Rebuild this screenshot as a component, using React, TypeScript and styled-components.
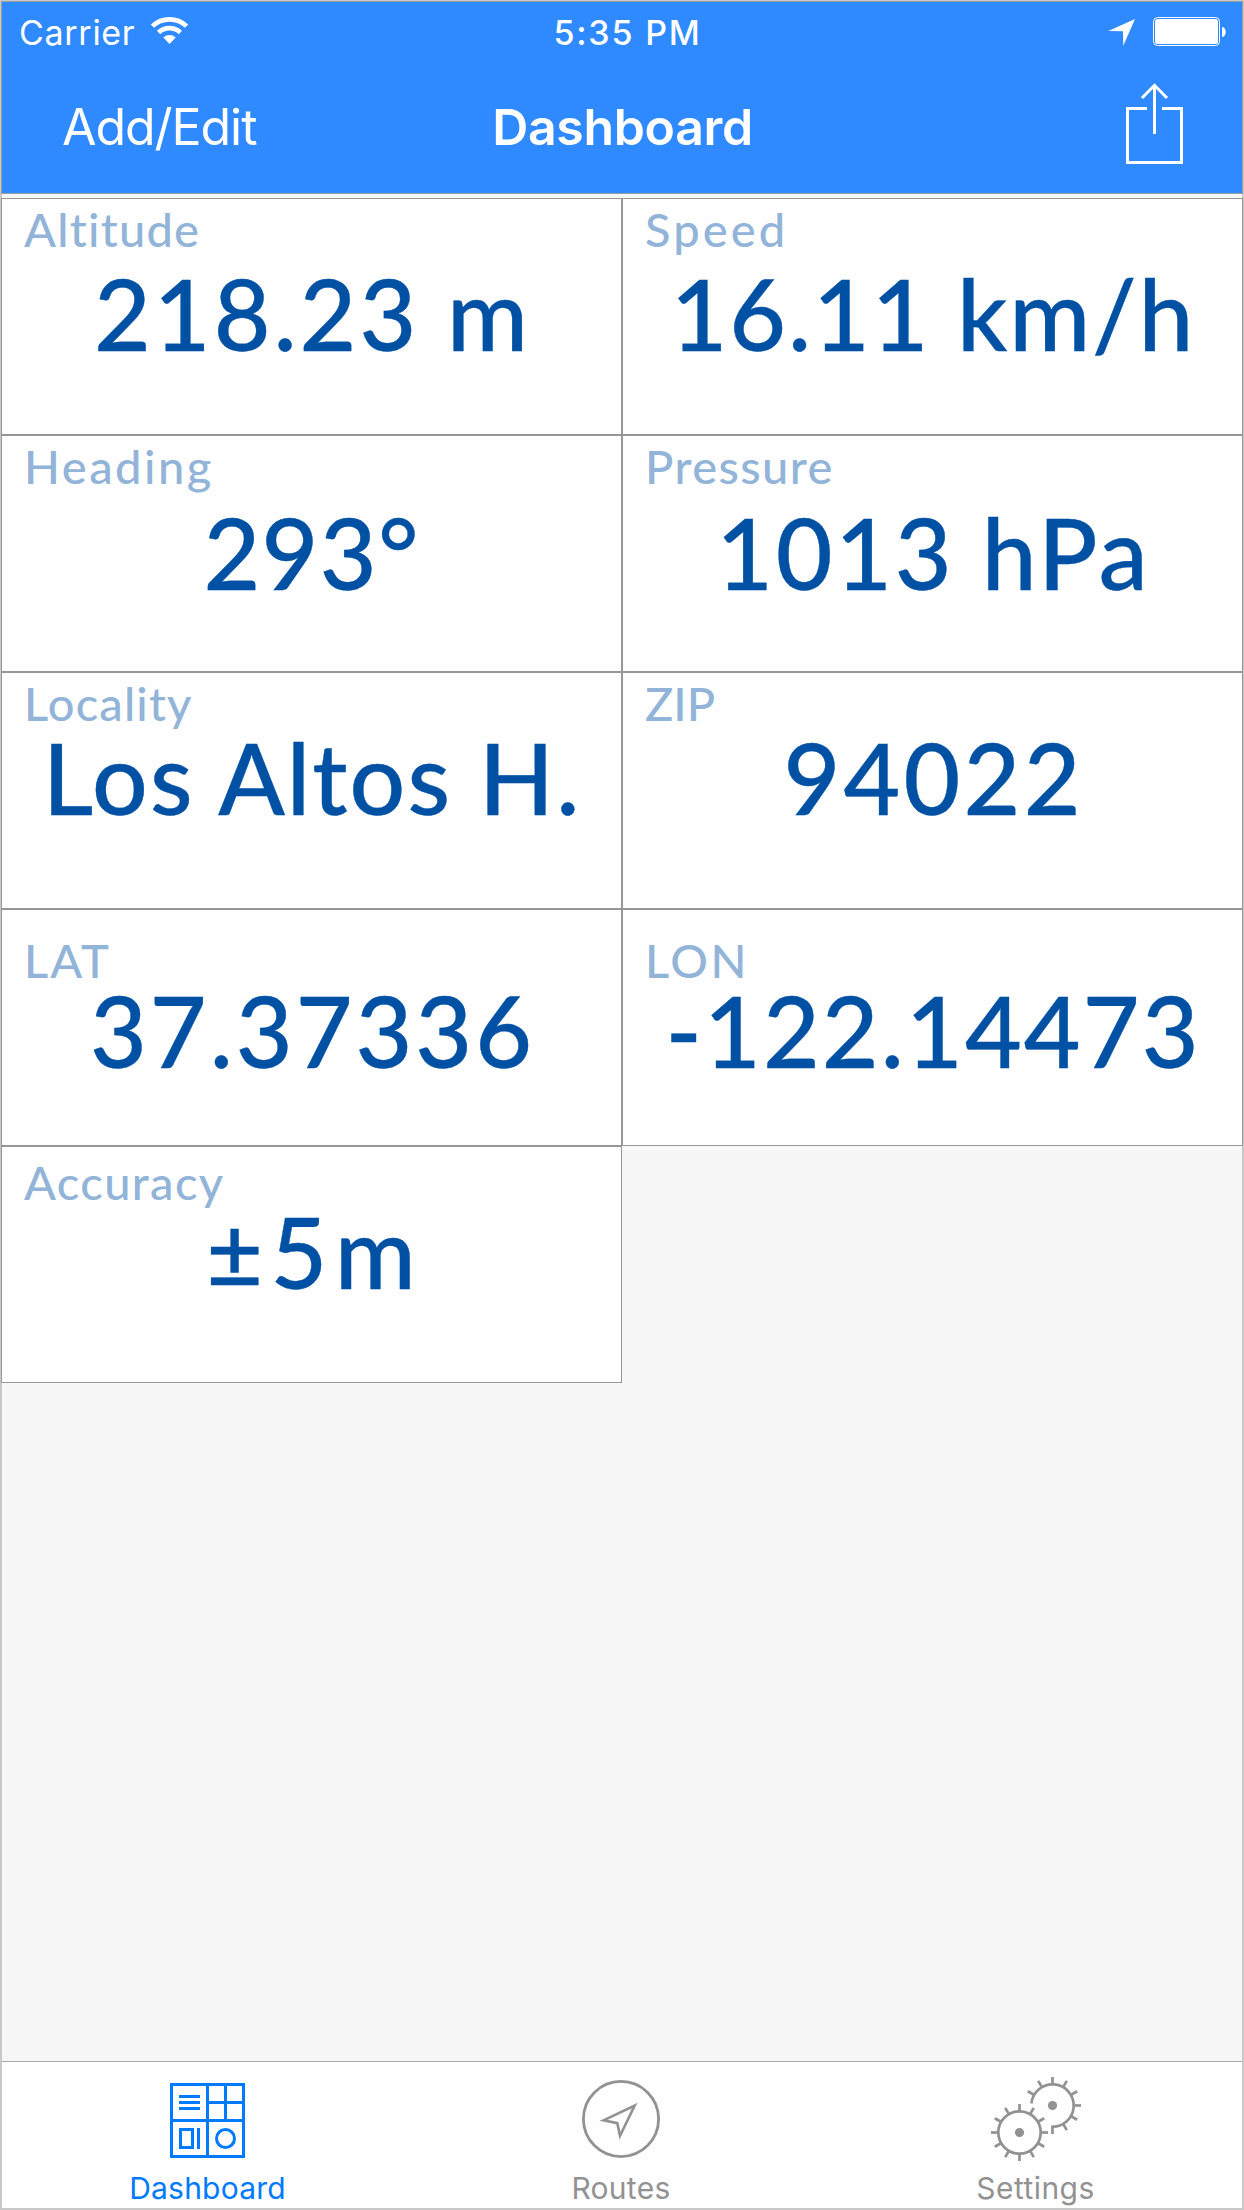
import React from 'react';
import styled, { createGlobalStyle } from 'styled-components';

const BLUE = '#2f8aff';
const TINT = '#007aff';
const MUTED = '#929292';
const LINE = '#979797';

const GlobalStyle = createGlobalStyle`
  *, *::before, *::after { box-sizing: border-box; }
  body { margin: 0; background: #c8c8c8; }
`;

const Screen = styled.div`
  display: flex;
  flex-direction: column;
  width: 1244px;
  height: 2210px;
  border: 2px solid #c8c8c8;
  background: #f7f7f7;
  font-family: Inter, 'Liberation Sans', sans-serif;
`;

const Header = styled.header`
  display: flex;
  flex-direction: column;
  flex: none;
  height: 193px;
  margin: -1px -1px 0;
  border: 1px solid #9a9fa6;
  background: ${BLUE};
  color: #fff;
`;

const StatusBar = styled.div`
  display: grid;
  grid-template-columns: 1fr auto 1fr;
  align-items: start;
  height: 60px;
  padding: 10px 16px 0 17px;
`;

const StatusText = styled.span<{ $weight: number; $spacing: number }>`
  font-size: 34px;
  line-height: 41px;
  font-weight: ${(p) => p.$weight};
  letter-spacing: ${(p) => p.$spacing}px;
  white-space: nowrap;
`;

const StatusGroup = styled.div<{ $end?: boolean }>`
  display: flex;
  align-items: flex-start;
  justify-content: ${(p) => (p.$end ? 'flex-end' : 'flex-start')};
  gap: ${(p) => (p.$end ? 18 : 16)}px;
`;

const Clock = styled.div`
  padding-left: 10px;
  line-height: 0;
`;

const Glyph = styled.svg<{ $top?: number }>`
  display: block;
  flex: none;
  margin-top: ${(p) => p.$top ?? 0}px;
  overflow: visible;
`;

const NavBar = styled.div`
  display: grid;
  grid-template-columns: 1fr auto 1fr;
  align-items: start;
  flex: 1;
  padding: 19px 59px 0 60px;
`;

const NavButton = styled.button<{ $end?: boolean }>`
  justify-self: ${(p) => (p.$end ? 'end' : 'start')};
  padding: 0;
  border: 0;
  background: none;
  color: inherit;
  font: 400 50px/60px Inter, 'Liberation Sans', sans-serif;
  letter-spacing: -1.05px;
  margin-top: ${(p) => (p.$end ? 2 : 16)}px;
`;

const Title = styled.h1`
  margin: 16px 0 0;
  font-size: 50px;
  line-height: 60px;
  font-weight: 600;
  letter-spacing: -0.35px;
`;

const Grid = styled.main`
  display: grid;
  grid-template-columns: 621px 621px;
  grid-auto-rows: 237px;
  align-content: start;
  flex: 1;
  margin: 4px -1px 0;
`;

const Cell = styled.section<{ $top: number; $gap: number }>`
  display: flex;
  flex-direction: column;
  gap: ${(p) => p.$gap}px;
  padding: ${(p) => p.$top}px 0 0;
  border: 1px solid ${LINE};
  background: #fefefe;
  font-family: Lato, 'Liberation Sans', sans-serif;
  font-weight: 500;
  white-space: nowrap;
`;

const Label = styled.div<{ $spacing: number }>`
  padding-left: 22px;
  color: #92b4d8;
  font-size: 47px;
  line-height: 46px;
  letter-spacing: ${(p) => p.$spacing}px;
`;

const Value = styled.div<{ $spacing: number }>`
  align-self: center;
  padding-right: 1px;
  margin-right: ${(p) => -p.$spacing}px;
  color: #0050a4;
  font-size: 98px;
  line-height: 90px;
  letter-spacing: ${(p) => p.$spacing}px;
  -webkit-text-stroke: 0.4px #0050a4;
`;

const TabBar = styled.nav`
  display: grid;
  grid-template-columns: 411px 416px 413px;
  flex: none;
  height: 147px;
  border-top: 1px solid #ababab;
  background: #fefefe;
`;

const Tab = styled.a<{ $active?: boolean }>`
  display: flex;
  flex-direction: column;
  align-items: center;
  padding-top: 15px;
  color: ${(p) => (p.$active ? TINT : MUTED)};
`;

const TabIcon = styled.span`
  display: flex;
  align-items: center;
  height: 84px;
`;

const TabLabel = styled.span<{ $spacing: number }>`
  margin-top: 9px;
  font-size: 30px;
  line-height: 36px;
  letter-spacing: ${(p) => p.$spacing}px;
`;

const WifiIcon = () => (
  <Glyph $top={5} width="37" height="27" viewBox="0 0 37 27" fill="none" stroke="#fff">
    <path d="M1.4 9.1A24.9 24.9 0 0 1 35.6 9.1" strokeWidth="4.7" />
    <path d="M7.6 15.5A15.9 15.9 0 0 1 29.4 15.5" strokeWidth="4.7" />
    <path d="M18.5 27L12.3 20.6A9 9 0 0 1 24.7 20.6Z" fill="#fff" stroke="none" />
  </Glyph>
);

const LocationIcon = () => (
  <Glyph $top={7} width="27" height="27" viewBox="0 0 27 27">
    <path d="M0.3 12L27 0L15.3 26.7L15 12.3Z" fill="#fff" />
  </Glyph>
);

const BatteryIcon = () => (
  <Glyph $top={5} width="73" height="29" viewBox="0 0 73 29">
    <rect x="0.5" y="0.5" width="66" height="28" rx="4" fill="none" stroke="#fff" />
    <rect x="2" y="2" width="63" height="25" rx="2.5" fill="#fff" />
    <path d="M69 10C74 10.5 74 19.5 69 20Z" fill="#fff" />
  </Glyph>
);

const ShareIcon = () => (
  <Glyph width="57" height="81" viewBox="0 0 57 81" fill="none" stroke="#fff" strokeWidth="3">
    <path d="M21 25.5H1.5V79.5H55.5V25.5H36" />
    <path d="M28.5 51V2" />
    <path d="M16 15L28.5 2.3L41 15" />
  </Glyph>
);

const DashboardIcon = () => (
  <Glyph $top={3} width="75" height="75" viewBox="0 0 75 75" fill="none" stroke="currentColor" strokeWidth="3">
    <path d="M1.5 1.5H73.5V73.5H1.5Z" />
    <path d="M37.5 1.5V73.5M1.5 37.5H73.5" />
    <path d="M55.5 1.5V37.5M37.5 19.5H73.5" />
    <path d="M9 13.5H30M9 19.5H30M9 25.5H30" />
    <path d="M10.5 46.5H22.5V64.5H10.5ZM28.5 45V66" />
    <circle cx="55.5" cy="55.5" r="9" />
  </Glyph>
);

const RoutesIcon = () => (
  <Glyph width="78" height="78" viewBox="0 0 78 78" fill="none" stroke="currentColor">
    <circle cx="39" cy="39" r="37.6" strokeWidth="2.8" />
    <path d="M21.5 40.3L52.7 25.5L38 55.8L35.3 43.2Z" strokeWidth="2.6" strokeMiterlimit="10" />
  </Glyph>
);

const Gear = ({ x, y, teeth, ring }: { x: number; y: number; teeth: number[]; ring?: string }) => (
  <g transform={`translate(${x} ${y})`}>
    {ring ? <path d={ring} /> : <circle r="21.2" />}
    <circle r="4.6" fill="currentColor" stroke="none" />
    {teeth.map((hour) => (
      <path key={hour} d="M0 -21V-28.5" transform={`rotate(${hour * 30})`} />
    ))}
  </g>
);

const SettingsIcon = () => (
  <Glyph width="90" height="84" viewBox="0 0 90 84" fill="none" stroke="currentColor" strokeWidth="2.7">
    <Gear x={28.5} y={55.5} teeth={[0, 1, 2, 3, 4, 5, 6, 7, 8, 9, 10, 11]} />
    <Gear
      x={61.5}
      y={28.5}
      teeth={[0, 1, 2, 3, 4, 5, 6, 10, 11]}
      ring="M-21.1 -2A21.2 21.2 0 1 1 -1.3 21.2"
    />
  </Glyph>
);

interface Reading {
  label: string;
  labelSpacing: number;
  value: string;
  valueSpacing: number;
  top: number;
  gap: number;
}

const readings: Reading[] = [
  { label: 'Altitude', labelSpacing: 1.25, value: '218.23 m', valueSpacing: 2.97, top: 7, gap: 16 },
  { label: 'Speed', labelSpacing: 3.1, value: '16.11 km/h', valueSpacing: 1.84, top: 7, gap: 16 },
  { label: 'Heading', labelSpacing: 2.5, value: '293°', valueSpacing: 1.33, top: 7, gap: 18 },
  { label: 'Pressure', labelSpacing: 1.4, value: '1013 hPa', valueSpacing: 2.7, top: 7, gap: 18 },
  { label: 'Locality', labelSpacing: 1.15, value: 'Los Altos H.', valueSpacing: 2.1, top: 7, gap: 6 },
  { label: 'ZIP', labelSpacing: 0, value: '94022', valueSpacing: 3.2, top: 7, gap: 6 },
  { label: 'LAT', labelSpacing: 2, value: '37.37336', valueSpacing: 3, top: 27, gap: 2 },
  { label: 'LON', labelSpacing: 2.5, value: '-122.14473', valueSpacing: 2.1, top: 27, gap: 2 },
  { label: 'Accuracy', labelSpacing: 1.4, value: '±5m', valueSpacing: 7.4, top: 12, gap: 1 },
];

export default function App() {
  return (
    <>
      <GlobalStyle />
      <Screen>
        <Header>
          <StatusBar>
            <StatusGroup>
              <StatusText $weight={400} $spacing={0.7}>Carrier</StatusText>
              <WifiIcon />
            </StatusGroup>
            <Clock>
              <StatusText $weight={500} $spacing={1.8}>5:35 PM</StatusText>
            </Clock>
            <StatusGroup $end>
              <LocationIcon />
              <BatteryIcon />
            </StatusGroup>
          </StatusBar>
          <NavBar>
            <NavButton>Add/Edit</NavButton>
            <Title>Dashboard</Title>
            <NavButton $end aria-label="Share">
              <ShareIcon />
            </NavButton>
          </NavBar>
        </Header>
        <Grid>
          {readings.map((r) => (
            <Cell key={r.label} $top={r.top} $gap={r.gap}>
              <Label $spacing={r.labelSpacing}>{r.label}</Label>
              <Value $spacing={r.valueSpacing}>{r.value}</Value>
            </Cell>
          ))}
        </Grid>
        <TabBar>
          <Tab $active>
            <TabIcon><DashboardIcon /></TabIcon>
            <TabLabel $spacing={0.2}>Dashboard</TabLabel>
          </Tab>
          <Tab>
            <TabIcon><RoutesIcon /></TabIcon>
            <TabLabel $spacing={0.28}>Routes</TabLabel>
          </Tab>
          <Tab>
            <TabIcon><SettingsIcon /></TabIcon>
            <TabLabel $spacing={0.43}>Settings</TabLabel>
          </Tab>
        </TabBar>
      </Screen>
    </>
  );
}
